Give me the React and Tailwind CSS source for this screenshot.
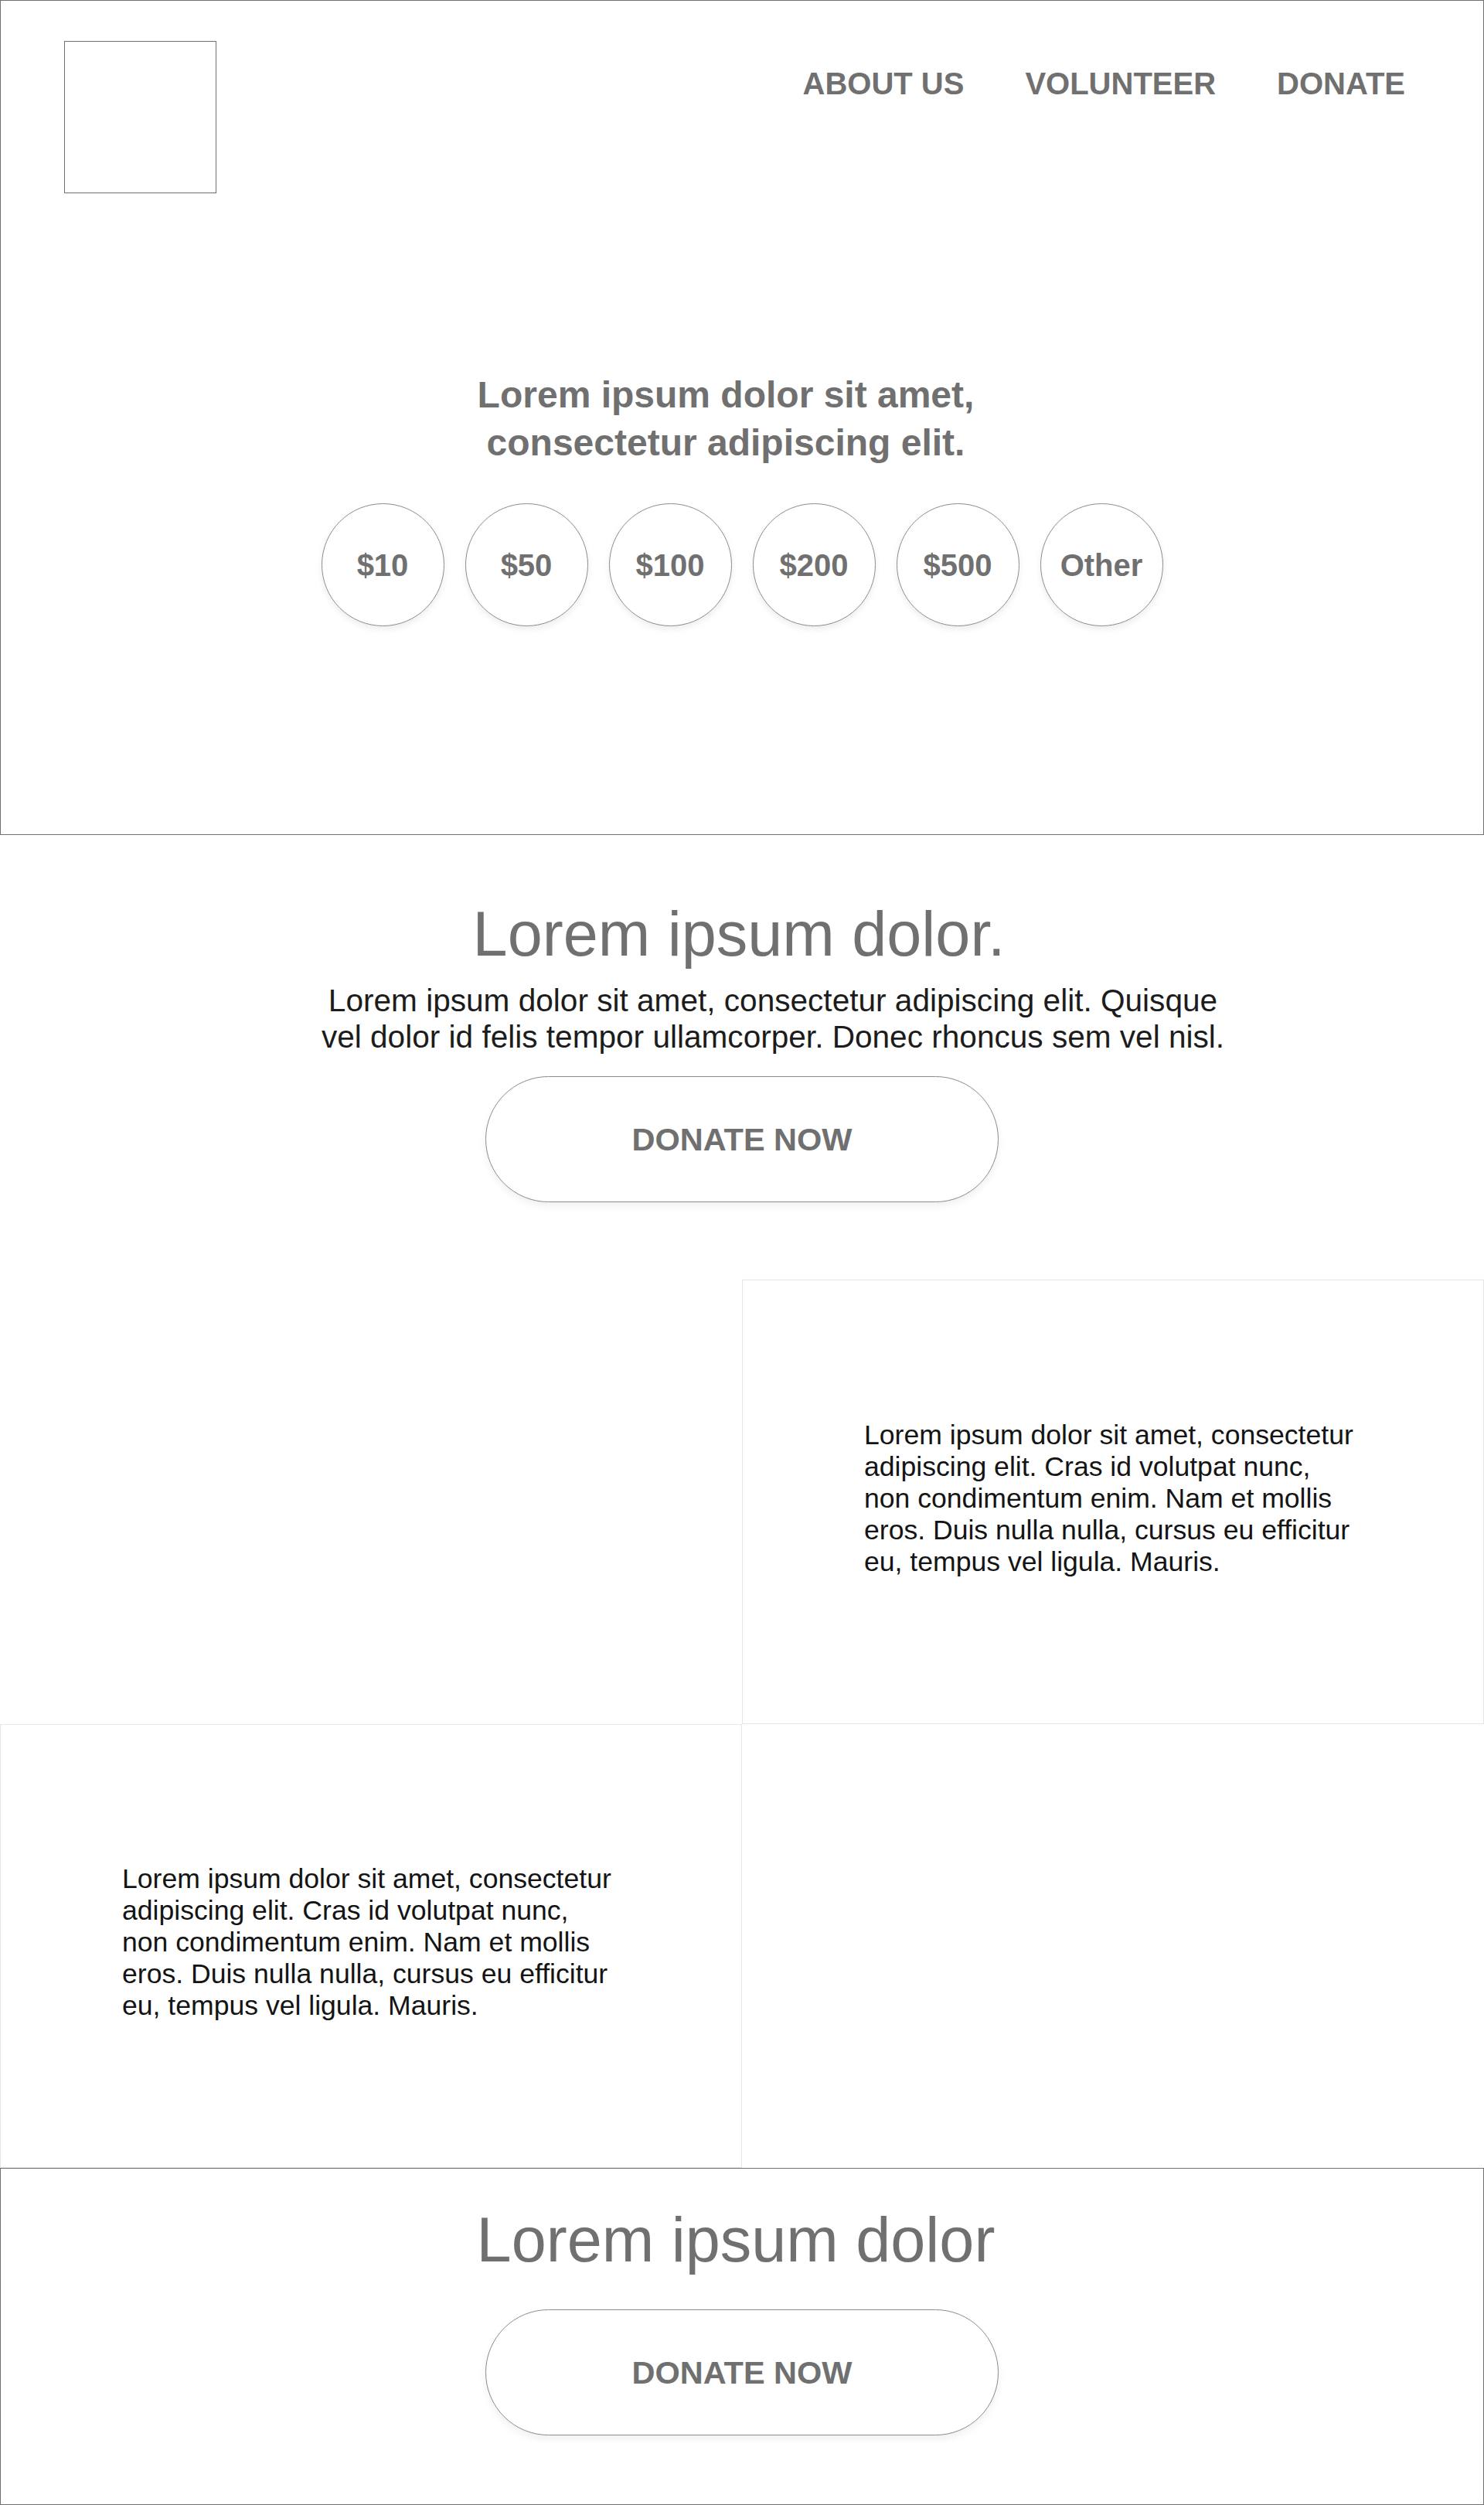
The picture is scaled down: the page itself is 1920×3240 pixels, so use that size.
import React from 'react';

const amounts = ['$10', '$50', '$100', '$200', '$500', 'Other'];

const DonateButton = () => (
  <button className="flex h-[163px] w-[664px] items-center justify-center rounded-full border border-[#8c8c8c] bg-white text-[41.5px] font-bold leading-none text-[#707070] shadow-[0_5px_10px_rgba(0,0,0,0.06)]">
    DONATE NOW
  </button>
);

const TextCell = () => (
  <div className="flex items-center border border-[#e6e6e6] pb-[8px] pl-[157px]">
    <p className="text-[35.6px] leading-[41px] text-[#141414]">
      Lorem ipsum dolor sit amet, consectetur
      <br />
      adipiscing elit. Cras id volutpat nunc,
      <br />
      non condimentum enim. Nam et mollis
      <br />
      eros. Duis nulla nulla, cursus eu efficitur
      <br />
      eu, tempus vel ligula. Mauris.
    </p>
  </div>
);

const App = () => {
  return (
    <div className="w-full bg-white font-['Liberation_Sans',Arial,sans-serif]">
      {/* hero */}
      <section className="flex h-[1080px] flex-col border border-[#707070]">
        <header className="flex items-start justify-between pl-[82px] pr-[101px] pt-[52px]">
          <div className="h-[197px] w-[197px] border border-[#707070]" />
          <nav className="mt-[35px] flex gap-[79px] text-[40px] font-bold leading-[40px] text-[#707070]">
            <a href="#">ABOUT US</a>
            <a href="#">VOLUNTEER</a>
            <a href="#">DONATE</a>
          </nav>
        </header>

        <h1 className="mt-[230px] pr-[42px] text-center text-[48px] font-bold leading-[62px] text-[#707070]">
          Lorem ipsum dolor sit amet,
          <br />
          consectetur adipiscing elit.
        </h1>

        <div className="mt-[47px] flex justify-center gap-[27px]">
          {amounts.map((a) => (
            <button
              key={a}
              className="flex h-[159px] w-[159px] items-center justify-center rounded-full border border-[#8c8c8c] bg-white text-[40px] font-bold text-[#707070] shadow-[0_4px_8px_rgba(0,0,0,0.07)]"
            >
              {a}
            </button>
          ))}
        </div>
      </section>

      {/* intro */}
      <section className="flex flex-col items-center">
        <h2 className="mt-[88px] pr-[8px] text-[81px] leading-none text-[#707070]">Lorem ipsum dolor.</h2>
        <p className="mt-[22px] pl-[80px] text-center text-[40.6px] leading-[47px] text-[#1c1c1c]">
          Lorem ipsum dolor sit amet, consectetur adipiscing elit. Quisque
          <br />
          vel dolor id felis tempor ullamcorper. Donec rhoncus sem vel nisl.
        </p>
        <div className="mt-[27px]">
          <DonateButton />
        </div>
      </section>

      {/* grid */}
      <div className="mt-[100px] grid h-[1149px] grid-cols-2 grid-rows-2">
        <div />
        <TextCell />
        <TextCell />
        <div />
      </div>

      {/* footer */}
      <footer className="flex h-[436px] flex-col items-center border border-[#707070]">
        <h2 className="mt-[52px] pr-[16px] text-[81px] leading-none text-[#707070]">Lorem ipsum dolor</h2>
        <div className="mt-[49px]">
          <DonateButton />
        </div>
      </footer>
    </div>
  );
};

export default App;
